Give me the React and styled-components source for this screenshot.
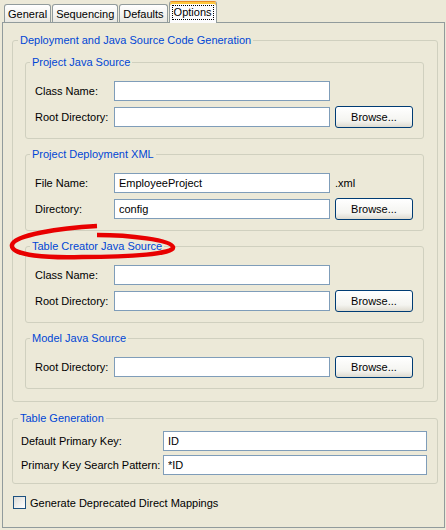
import React from 'react';
import styled, {createGlobalStyle} from 'styled-components';

const GlobalStyle = createGlobalStyle`
  html, body {
    margin: 0;
    padding: 0;
    background: #ECE9D8;
  }
  body {
    font-family: "Liberation Sans", Arial, sans-serif;
    font-size: 11px;
    color: #000;
  }
  * { box-sizing: border-box; }
`;

const Root = styled.div`
  position: relative;
  width: 446px;
  height: 530px;
  padding: 0 1px 0 2px;
`;

const TabStrip = styled.div`
  display: flex;
  align-items: flex-end;
  gap: 1px;
  height: 22px;
  padding-left: 2px;
`;

const Tab = styled.div`
  position: relative;
  z-index: ${p => p.$active ? 1 : 0};
  height: ${p => p.$active ? '22px' : '18px'};
  margin-bottom: ${p => p.$active ? '-1px' : '0'};
  padding: ${p => p.$active ? '2px 2px 0' : '2px 3px 0'};
  border: 1px solid #919B9C;
  border-bottom: none;
  border-top-color: ${p => p.$active ? '#E68B2C' : '#919B9C'};
  border-radius: 3px 3px 0 0;
  background: ${p => p.$active
    ? '#FCFCFE'
    : 'linear-gradient(#FFFFFF, #F3F3EF 60%, #E8E7E0)'};
  box-shadow: ${p => p.$active ? 'inset 0 2px 0 #FFC83C' : 'none'};
  line-height: 14px;
  white-space: nowrap;
`;

const Focus = styled.span`
  display: inline-block;
  margin-top: 1px;
  padding: 0 1px;
  border: 1px dotted #000;
  line-height: 13px;
`;

const Panel = styled.div`
  height: 506px;
  border: 1px solid #919B9C;
  background: #ECE9D8;
  padding: 11px 6px 0 9px;
`;

const Group = styled.fieldset`
  margin: ${p => p.$margin || '0'};
  min-width: 0;
  border: 1px solid #D0D0BF;
  border-radius: 3px;
  padding: ${p => p.$pad};
  display: flex;
  flex-direction: column;
  gap: ${p => p.$gap || '0'};
`;

/* legend sits at the fieldset's left padding, so pull it back by $offset */
const Legend = styled.legend`
  margin-left: ${p => p.$offset}px;
  padding: 0 2px;
  color: #0046D5;
  line-height: 13px;
`;

const FieldRow = styled.div`
  display: grid;
  grid-template-columns: ${p => p.$cols};
  column-gap: 5px;
  align-items: center;
  height: 22px;
`;

const Label = styled.span`
  white-space: nowrap;
`;

const TextBox = styled.input`
  width: 100%;
  height: 20px;
  margin: 0;
  padding: 0 4px;
  border: 1px solid #7F9DB9;
  background: #fff;
  font-family: "Liberation Sans", Arial, sans-serif;
  font-size: 11px;
  color: #000;
  outline: none;
`;

const Button = styled.button`
  width: 78px;
  height: 22px;
  margin: 0;
  padding: 0;
  border: 1px solid #003C74;
  border-radius: 3px;
  background: linear-gradient(#FFFFFF, #F4F4F0 70%, #DEDBD0);
  font-family: "Liberation Sans", Arial, sans-serif;
  font-size: 11px;
  color: #000;
`;

const CheckRow = styled.label`
  display: flex;
  align-items: center;
  gap: 4px;
  margin: 12px 0 0 1px;
`;

const CheckBox = styled.span`
  width: 13px;
  height: 13px;
  border: 1px solid #1C5180;
  background: linear-gradient(135deg, #DCDCD7, #FFFFFF);
`;

const Annotation = styled.svg`
  position: absolute;
  left: 0;
  top: 210px;
  width: 200px;
  height: 60px;
  pointer-events: none;
`;

const COLS = '74px 216px 78px';

const SourceRow = ({label, value = '', browse, suffix}) => (
	<FieldRow $cols={COLS}>
		<Label>{label}</Label>
		<TextBox readOnly value={value}/>
		{browse ? <Button>Browse...</Button> : suffix ? <Label>{suffix}</Label> : <span/>}
	</FieldRow>
);

const SubGroup = ({title, children}) => (
	<Group $pad="11px 10px 10px 9px" $gap="4px">
		<Legend $offset={-5}>{title}</Legend>
		{children}
	</Group>
);

export default function App() {
	return (
		<Root>
			<GlobalStyle/>
			<TabStrip>
				<Tab>General</Tab>
				<Tab>Sequencing</Tab>
				<Tab>Defaults</Tab>
				<Tab $active><Focus>Options</Focus></Tab>
			</TabStrip>
			<Panel>
				<Group $pad="9px 13px 12px 12px" $gap="9px">
					<Legend $offset={-7}>Deployment and Java Source Code Generation</Legend>
					<SubGroup title="Project Java Source">
						<SourceRow label="Class Name:"/>
						<SourceRow label="Root Directory:" browse/>
					</SubGroup>
					<SubGroup title="Project Deployment XML">
						<SourceRow label="File Name:" value="EmployeeProject" suffix=".xml"/>
						<SourceRow label="Directory:" value="config" browse/>
					</SubGroup>
					<SubGroup title="Table Creator Java Source">
						<SourceRow label="Class Name:"/>
						<SourceRow label="Root Directory:" browse/>
					</SubGroup>
					<SubGroup title="Model Java Source">
						<SourceRow label="Root Directory:" browse/>
					</SubGroup>
				</Group>
				<Group $pad="5px 10px 7px 8px" $gap="2px" $margin="10px 0 0">
					<Legend $offset={-3}>Table Generation</Legend>
					<FieldRow $cols="137px 1fr">
						<Label>Default Primary Key:</Label>
						<TextBox readOnly value="ID"/>
					</FieldRow>
					<FieldRow $cols="137px 1fr">
						<Label>Primary Key Search Pattern:</Label>
						<TextBox readOnly value="*ID"/>
					</FieldRow>
				</Group>
				<CheckRow>
					<CheckBox/>
					<span>Generate Deprecated Direct Mappings</span>
				</CheckRow>
			</Panel>
			<Annotation viewBox="0 0 200 60">
				<path
					d="M97 16 C60 18, 14 25, 12 35 C10 46, 50 48, 82 47 C130 47, 175 44, 173 37 C171 30, 130 25, 97 25"
					fill="none" stroke="#E80000" strokeWidth="4.5"/>
			</Annotation>
		</Root>
	);
}
